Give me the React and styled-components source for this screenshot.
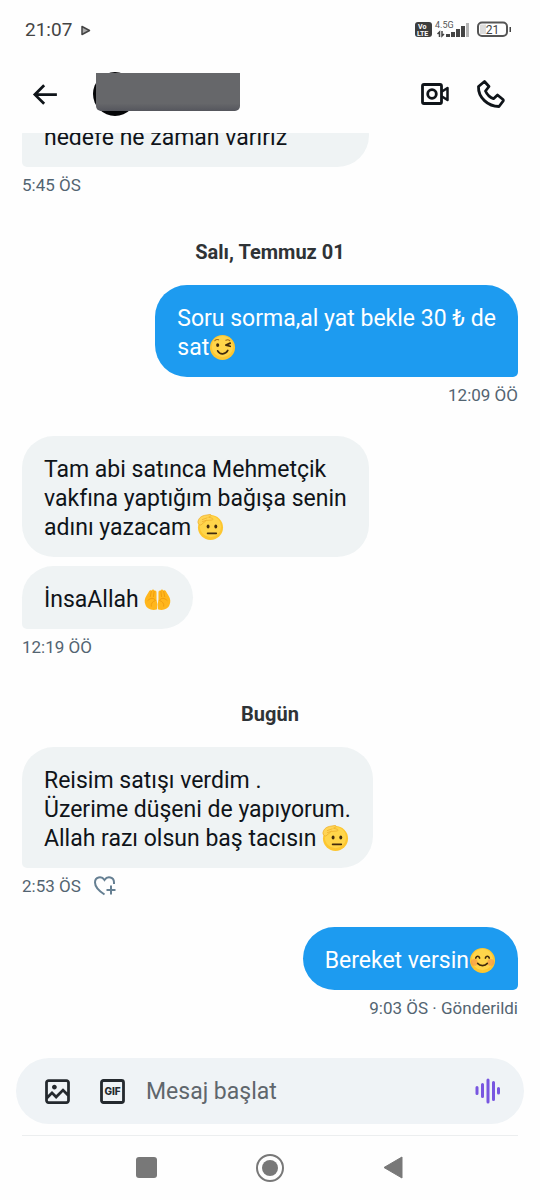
import React, { useState } from "react";
import styled, { createGlobalStyle } from "styled-components";

const GlobalStyle = createGlobalStyle`
  * {
    box-sizing: border-box;
  }

  body {
    margin: 0;
    background: #fefefe;
    font-family: Roboto, "Noto Sans", sans-serif;
  }

  button {
    display: flex;
    padding: 0;
    border: none;
    background: none;
    color: inherit;
    cursor: pointer;
  }

  svg {
    display: block;
    flex: none;
  }
`;

const Page = styled.div`
  display: flex;
  flex-direction: column;
  height: 100vh;
`;

const StatusBar = styled.div`
  display: flex;
  align-items: center;
  justify-content: space-between;
  height: 60px;
  padding: 0 28px 0 25px;
  color: #444;
`;

const StatusGroup = styled.div`
  display: flex;
  align-items: center;
  gap: 9px;
`;

const Clock = styled.span`
  font-size: 19px;
  line-height: 24px;
`;

const Header = styled.header`
  display: flex;
  align-items: center;
  height: 73px;
  padding: 0 34px 5px 28px;
  color: #0f1419;
`;

const Profile = styled.div`
  display: grid;
  align-items: center;
  margin-left: 32px;
`;

const Avatar = styled.div`
  grid-area: 1 / 1;
  width: 44px;
  height: 44px;
  border-radius: 50%;
  background: #050608;
`;

const NameCover = styled.div`
  grid-area: 1 / 1;
  width: 144px;
  height: 38px;
  margin: 0 0 4px 3px;
  border-radius: 0 0 5px 5px;
  background: linear-gradient(#66676a 80%, #55565d);
`;

const HeaderActions = styled.div`
  display: flex;
  align-items: center;
  gap: 26px;
  margin-left: auto;
`;

const Conversation = styled.main`
  display: flex;
  flex: 1;
  flex-direction: column;
  justify-content: flex-end;
  min-height: 0;
  padding: 0 22px 38px;
  overflow: hidden;
`;

const DateHeading = styled.h2`
  flex: none;
  margin: 43px 0 21px;
  color: #2f3336;
  font-size: 20px;
  font-weight: 700;
  line-height: 24px;
  text-align: center;
`;

const Group = styled.section`
  display: flex;
  flex: none;
  flex-direction: column;
  align-items: ${(props) => (props.$mine ? "flex-end" : "flex-start")};

  & + & {
    margin-top: 29px;
  }
`;

const Bubble = styled.p`
  min-width: ${(props) => (props.$wide ? "70%" : "0")};
  margin: 0;
  padding: 19px 22px 15px;
  border-radius: 32px;
  border-bottom-right-radius: ${(props) =>
    props.$mine && props.$last ? 5 : 32}px;
  border-bottom-left-radius: ${(props) =>
    !props.$mine && props.$last ? 5 : 32}px;
  background: ${(props) => (props.$mine ? "#1d9bf0" : "#eff3f4")};
  color: ${(props) => (props.$mine ? "#fff" : "#0f1419")};
  font-size: 23px;
  line-height: 29px;
  white-space: pre-line;

  & + & {
    margin-top: 9px;
  }
`;

const Meta = styled.div`
  display: flex;
  align-items: center;
  gap: 12px;
  height: 24px;
  margin-top: 6px;
  color: #536471;
  font-size: 17px;
  line-height: 24px;
`;

const EmojiIcon = styled.svg`
  display: inline-block;
  width: 27px;
  height: 27px;
  margin: -4px 0;
  vertical-align: -2px;
`;

const Composer = styled.form`
  display: flex;
  align-items: center;
  height: 66px;
  margin: 0 16px;
  padding: 0 20px 0 25px;
  border-radius: 33px;
  background: #eff3f6;
  color: #24292e;
`;

const ComposerTools = styled.div`
  display: flex;
  gap: 22px;
`;

const MessageInput = styled.input`
  flex: 1;
  min-width: 0;
  padding: 2px 0 0;
  margin-left: 17px;
  border: none;
  outline: none;
  background: none;
  color: #0f1419;
  font: 23px/30px Roboto, "Noto Sans", sans-serif;

  &::placeholder {
    color: #5f666c;
    opacity: 1;
  }
`;

const NavBar = styled.nav`
  display: flex;
  align-items: center;
  justify-content: center;
  gap: 96px;
  height: 65px;
  margin: 11px 22px 0;
  border-top: 1px solid #eceeef;
  color: #787878;
`;

function Face({ children }) {
  return (
    <>
      <circle cx="14" cy="14" r="13" fill="#fdc62f" />
      <circle cx="14" cy="13" r="11" fill="#ffd54a" />
      {children}
    </>
  );
}

const emojis = {
  wink: (
    <Face>
      <ellipse cx="9" cy="11.500" rx="1.600" ry="2" fill="#422b0d" />
      <path
        d="M22 9.500l-4.500 2 4.500 1.200M9 17.500c2.500 4.500 8 4 10.500-.5"
        fill="none"
        stroke="#422b0d"
        strokeWidth="1.800"
        strokeLinecap="round"
        strokeLinejoin="round"
      />
      <path
        d="M6 7c1-1.200 2.500-1.500 4-1M17.500 6.500c1.500-.8 3-.6 4 .3"
        fill="none"
        stroke="#a56a16"
        strokeWidth="1.200"
        strokeLinecap="round"
      />
    </Face>
  ),
  salute: (
    <Face>
      <ellipse cx="11.500" cy="13" rx="1.500" ry="2" fill="#422b0d" />
      <ellipse cx="19.500" cy="13" rx="1.500" ry="2" fill="#422b0d" />
      <path
        d="M11 20h9"
        stroke="#422b0d"
        strokeWidth="1.800"
        strokeLinecap="round"
      />
      <path
        d="M1 8C1.500 4.500 4 2.300 7.500 1.500l6-1c1.500 0 1.500 1.300.5 1.800l-2 1 4 1.200c1 .5.700 1.600-.4 1.700l-6 .5L4 11.500C2 11 .8 10 1 8z"
        fill="#ffd454"
        stroke="#eeb02a"
        strokeWidth=".8"
        strokeLinejoin="round"
      />
      <path
        d="M5.500 5.800l5-1.800M5.500 8l4-1.500"
        stroke="#eeb02a"
        strokeWidth=".8"
        strokeLinecap="round"
      />
    </Face>
  ),
  palms: (
    <>
      <path
        d="M13.500 24C9 26 3 24 1.500 19.500.2 16 .5 13 2.500 10L5 6c.5-1.500 2-2 2.800-1.200C8.500 3.200 10.300 3.300 10.800 4.800 12.300 4.500 13 5.500 13 7v7l.8 5z"
        fill="#ffb61c"
      />
      <path
        d="M14.500 24C19 26 25 24 26.500 19.500c1.300-3.500 1-6.500-1-9.500L23 6c-.5-1.500-2-2-2.800-1.200-.7-1.600-2.500-1.500-3 0C15.700 4.500 15 5.500 15 7v7l-.8 5z"
        fill="#ffb61c"
      />
      <path
        d="M7.600 5.500L6.500 11M10.500 5.500L9.800 11M4 15c3-3 6-3 8 0-3 1-5 3-4.500 6M20.400 5.500l1.100 5.500M17.500 5.500l.7 5.500M24 15c-3-3-6-3-8 0 3 1 5 3 4.500 6"
        fill="none"
        stroke="#ef9c10"
        strokeWidth="1"
        strokeLinecap="round"
      />
    </>
  ),
  smile: (
    <Face>
      <circle cx="5.500" cy="16" r="3.500" fill="#f7904a" opacity=".6" />
      <circle cx="22.500" cy="16" r="3.500" fill="#f7904a" opacity=".6" />
      <path
        d="M7 11.500c.8-2.600 3.200-2.600 4 0M17 11.500c.8-2.600 3.200-2.600 4 0M9 17c2.500 3 7.500 3 10 0"
        fill="none"
        stroke="#422b0d"
        strokeWidth="1.700"
        strokeLinecap="round"
      />
    </Face>
  ),
};

function Emoji({ name, label }) {
  return (
    <EmojiIcon viewBox="0 0 28 28" role="img" aria-label={label}>
      {emojis[name]}
    </EmojiIcon>
  );
}

function StatusIcons() {
  return (
    <svg width="97" height="22" viewBox="0 0 97 22" aria-hidden="true">
      <rect x="0" y="3" width="17" height="15" rx="3" fill="#3d3d3d" />
      <g
        fill="#fff"
        fontFamily="Roboto, sans-serif"
        fontWeight="700"
        fontSize="7"
      >
        <text x="3" y="10">Vo</text>
        <text x="2" y="17">LTE</text>
      </g>
      <text x="20" y="9" fontFamily="Roboto, sans-serif" fontSize="9" fill="#555">
        4.5G
      </text>
      <path
        d="M24.500 18v-5l-2 2M27 12v5l2-2"
        fill="none"
        stroke="#444"
        strokeWidth="1.500"
      />
      <path
        d="M31 15h4v3h-4zM36 13h4v5h-4zM41 10h4v8h-4zM46 7h4v11h-4z"
        fill="#444"
      />
      <path d="M51 4h3v14h-3z" fill="#b5b5b5" />
      <rect
        x="63"
        y="3.500"
        width="29"
        height="13.500"
        rx="4"
        fill="#fff"
        stroke="#555"
        strokeWidth="2"
      />
      <path d="M65 5.500h6V15h-6z" fill="#ddd" />
      <path d="M94.500 8H96v5h-1.500z" fill="#444" />
      <text
        x="77.500"
        y="15"
        textAnchor="middle"
        fontFamily="Roboto, sans-serif"
        fontSize="12"
        fill="#444"
      >
        21
      </text>
    </svg>
  );
}

function PlayIcon() {
  return (
    <svg width="10" height="11" viewBox="0 0 10 11" aria-hidden="true">
      <path
        d="M1 1.500l7.500 4L1 9.500z"
        fill="#aaa"
        stroke="#444"
        strokeWidth="1.500"
        strokeLinejoin="round"
      />
    </svg>
  );
}

function BackIcon() {
  return (
    <svg width="33" height="33" viewBox="0 0 24 24" fill="currentColor">
      <path d="M7.414 13l5.043 5.040-1.414 1.420L3.586 12l7.457-7.460 1.414 1.420L7.414 11H21v2H7.414z" />
    </svg>
  );
}

function VideoIcon() {
  return (
    <svg
      width="30"
      height="24"
      viewBox="0 0 30 24"
      fill="none"
      stroke="currentColor"
      strokeWidth="2.800"
      strokeLinejoin="round"
    >
      <rect x="2.500" y="2.500" width="19" height="19" rx="1.500" />
      <circle cx="12" cy="12" r="4.300" />
      <path d="M22 9.500L27.500 6v12L22 14.500" strokeWidth="2.500" />
    </svg>
  );
}

function PhoneIcon() {
  return (
    <svg
      width="30"
      height="30"
      viewBox="0 0 30 30"
      fill="none"
      stroke="currentColor"
      strokeWidth="2.800"
      strokeLinejoin="round"
    >
      <path d="M8.500 2.500l4.500 5-3.500 4.500c1.500 3.500 4.500 6.500 8 7.700l4-3.700 5.500 4.500c.5.500.5 1 .2 1.500L23 27.500C12 27.500 2 18.500 2.500 7.500z" />
    </svg>
  );
}

function ReactIcon() {
  return (
    <svg
      width="24"
      height="22"
      viewBox="0 0 24 22"
      fill="none"
      stroke="#657f92"
      strokeWidth="2"
    >
      <path d="M11.500 19.500C4.500 15 2 11.500 2 7.500 2 2 8.500.5 11.500 5c3-4.500 9.500-3 9.500 2.500V9" />
      <path d="M18 10.500v9M13.500 15h9" />
    </svg>
  );
}

function ImageIcon() {
  return (
    <svg width="33" height="33" viewBox="0 0 24 24" fill="currentColor">
      <path d="M3 5.500C3 4.119 4.119 3 5.500 3h13C19.881 3 21 4.119 21 5.500v13c0 1.381-1.119 2.500-2.500 2.500h-13C4.119 21 3 19.881 3 18.500v-13zM5.500 5c-.276 0-.5.224-.5.500v9.086l3-3 3 3 5-5 3 3V5.500c0-.276-.224-.5-.5-.5h-13zM19 15.414l-3-3-5 5-3-3-3 3V18.500c0 .276.224.5.5.5h13c.276 0 .5-.224.5-.5v-3.086zM9.750 7C8.784 7 8 7.784 8 8.750s.784 1.750 1.750 1.750 1.750-.784 1.750-1.750S10.716 7 9.750 7z" />
    </svg>
  );
}

function GifIcon() {
  return (
    <svg width="33" height="33" viewBox="0 0 33 33">
      <rect
        x="5.500"
        y="5.500"
        width="22"
        height="22"
        rx="2"
        fill="none"
        stroke="currentColor"
        strokeWidth="2.800"
      />
      <text
        x="16.500"
        y="20"
        textAnchor="middle"
        fontFamily="Inter, sans-serif"
        fontSize="10"
        fontWeight="800"
        fill="currentColor"
      >
        GIF
      </text>
    </svg>
  );
}

function VoiceIcon() {
  return (
    <svg
      width="32"
      height="32"
      viewBox="0 0 32 32"
      stroke="#7856e0"
      strokeWidth="3"
      strokeLinecap="round"
    >
      <path d="M5 12.500v6M10.500 9.500v12M16 5v22M21.500 7.500v17M26.500 13.500v4.500" />
    </svg>
  );
}

function App() {
  const [message, setMessage] = useState("");

  const handleSubmit = (event) => {
    event.preventDefault();
    setMessage("");
  };

  return (
    <Page>
      <GlobalStyle />
      <StatusBar>
        <StatusGroup>
          <Clock>21:07</Clock>
          <PlayIcon />
        </StatusGroup>
        <StatusIcons />
      </StatusBar>

      <Header>
        <button type="button" aria-label="Geri">
          <BackIcon />
        </button>
        <Profile>
          <Avatar />
          <NameCover />
        </Profile>
        <HeaderActions>
          <button type="button" aria-label="Görüntülü arama">
            <VideoIcon />
          </button>
          <button type="button" aria-label="Sesli arama">
            <PhoneIcon />
          </button>
        </HeaderActions>
      </Header>

      <Conversation>
        <Group>
          <Bubble $last $wide>
            hedefe ne zaman varırız
          </Bubble>
          <Meta>5:45 ÖS</Meta>
        </Group>

        <DateHeading>Salı, Temmuz 01</DateHeading>
        <Group $mine>
          <Bubble $mine $last>
            {"Soru sorma,al yat bekle 30 ₺ de\nsat"}
            <Emoji name="wink" label="😉" />
          </Bubble>
          <Meta>12:09 ÖÖ</Meta>
        </Group>
        <Group>
          <Bubble>
            {"Tam abi satınca Mehmetçik\nvakfına yaptığım bağışa senin\nadını yazacam "}
            <Emoji name="salute" label="🫡" />
          </Bubble>
          <Bubble $last>
            {"İnsaAllah "}
            <Emoji name="palms" label="🤲" />
          </Bubble>
          <Meta>12:19 ÖÖ</Meta>
        </Group>

        <DateHeading>Bugün</DateHeading>
        <Group>
          <Bubble $last>
            {"Reisim satışı verdim .\nÜzerime düşeni de yapıyorum.\nAllah razı olsun baş tacısın "}
            <Emoji name="salute" label="🫡" />
          </Bubble>
          <Meta>
            2:53 ÖS
            <button type="button" aria-label="Tepki ekle">
              <ReactIcon />
            </button>
          </Meta>
        </Group>
        <Group $mine>
          <Bubble $mine $last>
            Bereket versin
            <Emoji name="smile" label="😊" />
          </Bubble>
          <Meta>9:03 ÖS · Gönderildi</Meta>
        </Group>
      </Conversation>

      <Composer onSubmit={handleSubmit}>
        <ComposerTools>
          <button type="button" aria-label="Fotoğraf ekle">
            <ImageIcon />
          </button>
          <button type="button" aria-label="GIF ekle">
            <GifIcon />
          </button>
        </ComposerTools>
        <MessageInput
          type="text"
          aria-label="Mesaj"
          placeholder="Mesaj başlat"
          value={message}
          onChange={(event) => setMessage(event.target.value)}
        />
        <button type="button" aria-label="Sesli mesaj">
          <VoiceIcon />
        </button>
      </Composer>

      <NavBar>
        <button type="button" aria-label="Son uygulamalar">
          <svg width="28" height="28" viewBox="0 0 28 28">
            <rect x="4" y="3" width="21" height="21" rx="3" fill="currentColor" />
          </svg>
        </button>
        <button type="button" aria-label="Ana ekran">
          <svg width="28" height="28" viewBox="0 0 28 28">
            <circle
              cx="14"
              cy="14"
              r="13"
              fill="none"
              stroke="currentColor"
              strokeWidth="2"
            />
            <circle cx="14" cy="14" r="8" fill="currentColor" />
          </svg>
        </button>
        <button type="button" aria-label="Önceki">
          <svg width="28" height="28" viewBox="0 0 28 28">
            <path
              d="M22 3v21L4 13.500z"
              fill="currentColor"
              stroke="currentColor"
              strokeLinejoin="round"
            />
          </svg>
        </button>
      </NavBar>
    </Page>
  );
}

export default App;
